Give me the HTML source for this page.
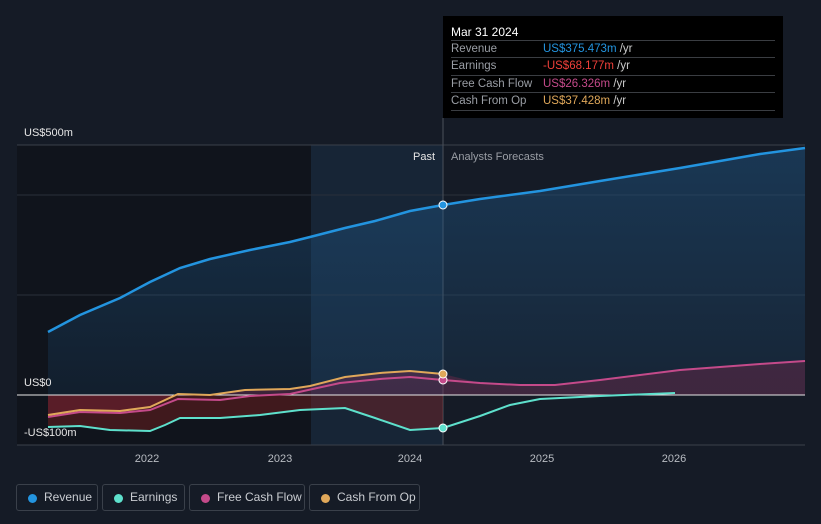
<!DOCTYPE html>
<html><head><meta charset="utf-8"><style>
body{margin:0;width:821px;height:524px;background:#151b26;font-family:"Liberation Sans",sans-serif;overflow:hidden;position:relative}
.tt{position:absolute;left:443px;top:16px;width:340px;height:102px;background:#000;color:#fff;font-size:11.5px}
.tt .h{position:absolute;left:8px;top:9px;font-size:12px}
.row{position:absolute;left:8px;width:324px;border-top:1px solid #3a3d42;height:17px;line-height:17px;color:#9a9ea5;white-space:nowrap}
.row span{position:absolute;left:92px}
.leg{position:absolute;top:484px;height:27px;border:1px solid #3a404a;border-radius:3px;color:#c9ccd1;font-size:12px;line-height:25px;box-sizing:border-box;white-space:nowrap}
.leg i{position:absolute;left:11px;top:9px;width:9px;height:9px;border-radius:50%}
.leg b{font-weight:normal;position:absolute;left:27px}
</style></head><body>
<svg width="821" height="524" style="position:absolute;left:0;top:0">
<defs>
<linearGradient id="rg" x1="0" y1="0" x2="0" y2="1"><stop offset="0" stop-color="#1f5a8c" stop-opacity=".45"/><stop offset="1" stop-color="#1f5a8c" stop-opacity=".15"/></linearGradient>
</defs>
<rect x="17" y="145" width="426" height="300" fill="#10141c"/>
<rect x="311" y="145" width="132" height="300" fill="#172536"/>
<line x1="17" y1="145" x2="805" y2="145" stroke="#3a404a"/>
<line x1="17" y1="195" x2="805" y2="195" stroke="#2a303a"/>
<line x1="17" y1="295" x2="805" y2="295" stroke="#2a303a"/>
<line x1="17" y1="445" x2="805" y2="445" stroke="#3a404a"/>
<line x1="443" y1="118" x2="443" y2="445" stroke="#4a505a"/>
<path d="M48,332 L80,315 120,298 150,282 180,268 210,259 250,250 290,242 310,237 345,228 375,221 410,211 443,205 480,199 540,191 600,181 680,168 760,154 805,148 L805,395 L48,395Z" fill="url(#rg)"/>
<path d="M48,415 L80,410 120,411 150,407 178,394 210,395 245,390 290,389 310,386 345,377 380,373 410,371 443,374 480,383 520,385 555,385 600,380 680,370 760,364 805,361 L805,395 L48,395Z" fill="#8a2a50" opacity=".35"/>
<path d="M48,427 L80,426 110,430 150,431 165,425 180,418 220,418 260,415 300,410 345,408 375,418 410,430 443,428 443,395 48,395Z" fill="#8a2020" opacity=".4"/>
<line x1="17" y1="395" x2="805" y2="395" stroke="#e8e8e8"/>
<path d="M48,332 L80,315 120,298 150,282 180,268 210,259 250,250 290,242 310,237 345,228 375,221 410,211 443,205 480,199 540,191 600,181 680,168 760,154 805,148" fill="none" stroke="#2394df" stroke-width="2.5"/>
<path d="M48,427 L80,426 110,430 150,431 165,425 180,418 220,418 260,415 300,410 345,408 375,418 410,430 443,428 480,416 510,405 540,399 600,396 675,393" fill="none" stroke="#5ee0cc" stroke-width="2"/>
<path d="M48,417 L80,412 120,413 150,410 178,399 220,400 250,396 290,394 340,383 380,379 410,377 443,380 480,383 520,385 555,385 600,380 680,370 760,364 805,361" fill="none" stroke="#c44a8a" stroke-width="2"/>
<path d="M48,415 L80,410 120,411 150,407 178,394 210,395 245,390 290,389 310,386 345,377 380,373 410,371 443,374" fill="none" stroke="#e0a85a" stroke-width="2"/>
<circle cx="443" cy="205" r="4" fill="#2394df" stroke="#fff" stroke-width="1"/>
<circle cx="443" cy="428" r="4" fill="#5ee0cc" stroke="#fff" stroke-width="1"/>
<circle cx="443" cy="380" r="4" fill="#c44a8a" stroke="#fff" stroke-width="1"/>
<circle cx="443" cy="374" r="4" fill="#e0a85a" stroke="#fff" stroke-width="1"/>
<g font-size="11" fill="#e6e6e6">
<text x="24" y="136">US$500m</text>
<text x="24" y="386">US$0</text>
<text x="24" y="436">-US$100m</text>
<text x="435" y="160" text-anchor="end">Past</text>
<text x="451" y="160" fill="#9a9ea5">Analysts Forecasts</text>
</g>
<g font-size="11" fill="#b8bcc2" text-anchor="middle">
<text x="147" y="462">2022</text><text x="280" y="462">2023</text><text x="410" y="462">2024</text><text x="542" y="462">2025</text><text x="674" y="462">2026</text>
</g>
</svg>
<div class="tt"><div class="h">Mar 31 2024</div>
<div class="row" style="top:24px">Revenue<span style="color:#2394df">US$375.473m <span style="position:static;color:#ccc">/yr</span></span></div>
<div class="row" style="top:41px">Earnings<span style="color:#f0403a">-US$68.177m <span style="position:static;color:#ccc">/yr</span></span></div>
<div class="row" style="top:59px">Free Cash Flow<span style="color:#c44a8a">US$26.326m <span style="position:static;color:#ccc">/yr</span></span></div>
<div class="row" style="top:76px;border-bottom:1px solid #3a3d42">Cash From Op<span style="color:#e0a85a">US$37.428m <span style="position:static;color:#ccc">/yr</span></span></div>
</div>
<div class="leg" style="left:16px;width:82px"><i style="background:#2394df"></i><b>Revenue</b></div>
<div class="leg" style="left:102px;width:83px"><i style="background:#5ee0cc"></i><b>Earnings</b></div>
<div class="leg" style="left:189px;width:116px"><i style="background:#c44a8a"></i><b>Free Cash Flow</b></div>
<div class="leg" style="left:309px;width:111px"><i style="background:#e0a85a"></i><b>Cash From Op</b></div>
</body></html>
